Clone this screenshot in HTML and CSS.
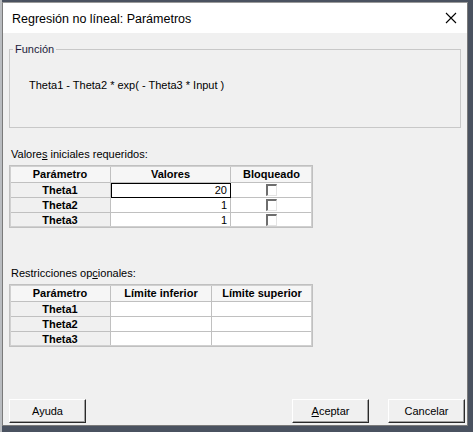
FILE: index.html
```html
<!DOCTYPE html>
<html lang="es">
<head>
<meta charset="utf-8">
<title>Regresión no líneal: Parámetros</title>
<link rel="stylesheet" href="styles.css">
</head>
<body>
<div class="window">
  <div class="titlebar">
    <span class="title">Regresión no líneal: Parámetros</span>
    <svg class="close" width="12" height="12" viewBox="0 0 12 12"><path d="M1 1 L11 11 M11 1 L1 11" stroke="#000" stroke-width="1.1" fill="none"/></svg>
  </div>
  <div class="client">
    <fieldset class="group">
      <legend>Función</legend>
      <div class="formula">Theta1 - Theta2 * exp( - Theta3 * Input )</div>
    </fieldset>

    <div class="label lbl1">Valore<u>s</u> iniciales requeridos:</div>
    <table class="grid g1">
      <tr class="hdr"><th class="c1">Parámetro</th><th class="c2">Valores</th><th class="c3">Bloqueado</th></tr>
      <tr><th>Theta1</th><td class="num focus">20</td><td class="chk"><span class="box"></span></td></tr>
      <tr><th>Theta2</th><td class="num">1</td><td class="chk"><span class="box"></span></td></tr>
      <tr><th>Theta3</th><td class="num">1</td><td class="chk"><span class="box"></span></td></tr>
    </table>

    <div class="label lbl2">Restricciones op<u>c</u>ionales:</div>
    <table class="grid g2">
      <tr class="hdr"><th class="c1">Parámetro</th><th class="d2">Límite inferior</th><th class="d3">Límite superior</th></tr>
      <tr><th>Theta1</th><td></td><td></td></tr>
      <tr><th>Theta2</th><td></td><td></td></tr>
      <tr><th>Theta3</th><td></td><td></td></tr>
    </table>

    <div class="buttons">
      <button class="btn">Ayuda</button>
      <span class="spacer"></span>
      <button class="btn"><u>A</u>ceptar</button>
      <button class="btn">Cancelar</button>
    </div>
  </div>
</div>
</body>
</html>
```

FILE: styles.css
```css
html, body {
  margin: 0;
  padding: 0;
}
body {
  width: 473px;
  height: 432px;
  overflow: hidden;
  background: linear-gradient(to right, #b9bcc0 0, #b9bcc0 2px, #4a5260 2px);
  font-family: "Liberation Sans", Arial, sans-serif;
  font-size: 11px;
  color: #000;
}
.window {
  margin: 2px 0 0 2px;
  width: 464px;
  height: 422px;
  border: 1px solid #7a7a7a;
  border-top-color: #9a9a9a;
  background: #f0f0f0;
  display: flex;
  flex-direction: column;
}
.titlebar {
  height: 30px;
  flex: none;
  background: #fff;
  display: flex;
  align-items: center;
  padding: 0 0 0 9px;
}
.title {
  font-family: "Liberation Sans", Arial, sans-serif;
  font-size: 12.5px;
  color: #000;
  flex: 1;
  padding-top: 1px;
}
.close {
  margin-right: 10px;
}
.client {
  flex: 1;
  position: relative;
  padding: 0 0 0 6px;
  display: flex;
  flex-direction: column;
}
.group {
  margin: 10px 0 0 0;
  width: 452px;
  height: 85px;
  box-sizing: border-box;
  border: 1px solid #c8c8c8;
  padding: 0;
}
.group legend {
  margin-left: 3px;
  padding: 0 2px;
  color: #1a1a3a;
  line-height: 12px;
}
.formula {
  margin: 24px 0 0 19px;
}
.label {
  margin-left: 2px;
}
.lbl1 { margin-top: 20px; }
.lbl2 { margin-top: 39px; }
.grid {
  border-collapse: collapse;
  border: 1px solid #7c7c7c;
  outline: 1px solid #d0d0d0;
  outline-offset: -2px;
  table-layout: fixed;
  width: 302px;
  margin-top: 5px;
}
.grid th, .grid td {
  border: 1px solid #c0c0c0;
  height: 14px;
  padding: 0 3px;
  line-height: 13px;
  font-size: 11px;
}
.grid th {
  font-weight: bold;
  background: #f0f0f0;
  text-align: center;
}
.grid tr.hdr th {
  background: #f6f6f6;
  height: 16px;
}
.grid td {
  background: #fff;
}
.c1 { width: 94px; }
.c2 { width: 113px; }
.c3 { width: 75px; }
.d2 { width: 94px; }
.d3 { width: 94px; }
.num { text-align: right; }
.focus { outline: 1px solid #000; outline-offset: -1px; }
.chk { text-align: center; padding: 0 !important; }
.box {
  display: inline-block;
  width: 11px;
  height: 12px;
  box-sizing: border-box;
  border-top: 2px solid #6e6e6e;
  border-left: 2px solid #6e6e6e;
  border-right: 1px solid #e4e4e4;
  border-bottom: 1px solid #e4e4e4;
  background: #fff;
  vertical-align: middle;
  margin-top: -2px;
}
.buttons {
  margin-top: auto;
  margin-bottom: 2px;
  display: flex;
  padding-right: 2px;
}
.spacer { flex: 1; }
.btn {
  width: 77px;
  height: 24px;
  margin: 0;
  margin-left: 19px;
  padding: 0;
  font-family: "Liberation Sans", Arial, sans-serif;
  font-size: 11px;
  color: #000;
  background: #f0f0f0;
  border: 1px solid;
  border-color: #fff #2a2a2a #2a2a2a #fff;
  box-shadow: inset -1px -1px 0 #a0a0a0;
}
.btn:first-child { margin-left: 0; }
```
